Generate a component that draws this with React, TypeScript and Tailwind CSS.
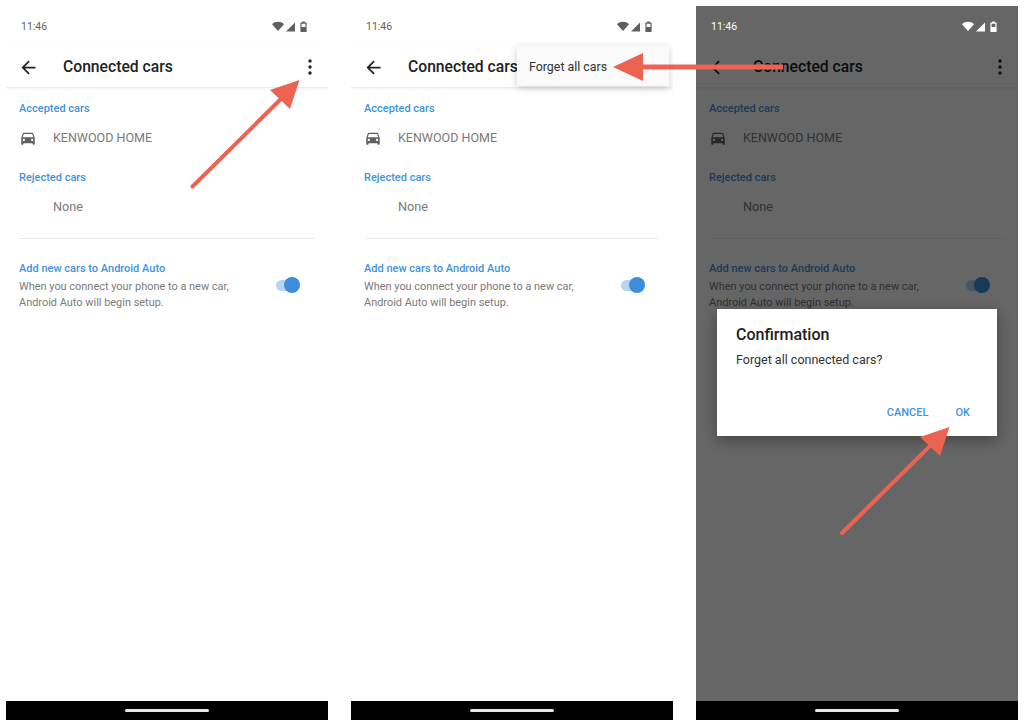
import React from 'react';

const carPath =
  'M18.92 6.01C18.72 5.42 18.16 5 17.5 5h-11c-.66 0-1.21.42-1.42 1.01L3 12v8c0 .55.45 1 1 1h1c.55 0 1-.45 1-1v-1h12v1c0 .55.45 1 1 1h1c.55 0 1-.45 1-1v-8l-2.08-5.99zM6.5 16c-.83 0-1.5-.67-1.5-1.5S5.67 13 6.5 13s1.5.67 1.5 1.5S7.33 16 6.5 16zm11 0c-.83 0-1.5-.67-1.5-1.5s.67-1.5 1.5-1.5 1.5.67 1.5 1.5-.67 1.5-1.5 1.5zM5 11l1.5-4.5h11L19 11H5z';

function StatusBar({ light }: { light?: boolean }) {
  const color = light ? '#ffffff' : '#5f5f5f';
  return (
    <div className="relative z-10 flex h-[41px] items-center justify-between pl-[15px] pr-[21px]">
      <span className={`text-[10.5px] ${light ? 'text-white' : 'text-[#5f5f5f]'}`}>11:46</span>
      <svg width="35" height="12" viewBox="0 0 35 12" fill={color}>
        <path d="M0 3.2C1.7 1.6 3.8.8 6 .8s4.3.8 6 2.4L6 10z" />
        <path d="M23 1.5V10.5H14z" />
        <path
          fillRule="evenodd"
          d="M29 1.5h1.2V.5h2.6v1h1.2c.4 0 .6.3.6.6V10.4c0 .4-.2.6-.6.6h-5c-.4 0-.6-.2-.6-.6V2.1c0-.3.2-.6.6-.6zm.6 1.2v3.3h3.8V2.7z"
        />
      </svg>
    </div>
  );
}

function Toolbar() {
  return (
    <div className="flex h-[41px] items-center border-b border-[#ececec] pl-[12px] pr-[15px] shadow-[0_1px_3px_rgba(0,0,0,0.06)]">
      <svg width="21" height="21" viewBox="0 0 24 24" fill="#222222">
        <path d="M20 11H7.83l5.59-5.59L12 4l-8 8 8 8 1.41-1.41L7.83 13H20v-2z" />
      </svg>
      <span className="ml-[24px] flex-1 text-[15.7px] font-medium text-[#212121]">Connected cars</span>
      <svg width="6" height="18" viewBox="0 0 6 18" fill="#222222">
        <circle cx="3" cy="3" r="1.7" />
        <circle cx="3" cy="9" r="1.7" />
        <circle cx="3" cy="15" r="1.7" />
      </svg>
    </div>
  );
}

function SectionLabel({ children }: { children: React.ReactNode }) {
  return <div className="text-[11px] font-medium leading-[16px] text-[#3f93dc]">{children}</div>;
}

function Content() {
  return (
    <div className="px-[13px] pt-[13px]">
      <SectionLabel>Accepted cars</SectionLabel>
      <div className="mt-[5px] flex h-[32px] items-center">
        <svg width="18" height="18" viewBox="0 0 24 24" fill="#616161">
          <path d={carPath} />
        </svg>
        <span className="ml-[16px] text-[12.5px] text-[#7a7a7a]">KENWOOD HOME</span>
      </div>
      <div className="mt-[16px]">
        <SectionLabel>Rejected cars</SectionLabel>
      </div>
      <div className="mt-[6px] flex h-[30px] items-center pl-[34px] text-[12.7px] text-[#7a7a7a]">None</div>
      <div className="mt-[16px] h-px bg-[#ececec]" />
      <div className="mt-[22px] flex items-center pr-[15px]">
        <div className="flex-1">
          <SectionLabel>Add new cars to Android Auto</SectionLabel>
          <p className="mt-[2px] text-[10.95px] leading-[16px] text-[#7a7a7a]">
            When you connect your phone to a new car,
            <br />
            Android Auto will begin setup.
          </p>
        </div>
        <div className="relative mb-[2px] mr-[5px] h-[11px] w-[19px] rounded-full bg-[#b7d5f0]">
          <div className="absolute -right-[5px] -top-[2.5px] h-[16px] w-[16px] rounded-full bg-[#3d8ddb]" />
        </div>
      </div>
    </div>
  );
}

function Phone({ dimmed, children }: { dimmed?: boolean; children?: React.ReactNode }) {
  return (
    <div className="relative flex h-[714px] w-[322px] flex-col overflow-hidden bg-white">
      <StatusBar light={dimmed} />
      <Toolbar />
      <div className="flex-1">
        <Content />
      </div>
      <div className="relative z-10 flex h-[19px] items-center justify-center bg-black">
        <div className="h-[3px] w-[84px] rounded-full bg-[#e8e8e8]" />
      </div>
      {dimmed && <div className="absolute inset-0 bg-black/60" />}
      {children}
    </div>
  );
}

function ConfirmDialog() {
  return (
    <div className="absolute left-[21px] top-[303px] flex h-[127px] w-[280px] flex-col bg-white px-[19px] pt-[16px] shadow-[0_4px_14px_rgba(0,0,0,0.35)]">
      <div className="text-[16px] font-medium leading-[20px] text-[#212121]">Confirmation</div>
      <div className="mt-[6px] text-[12.5px] leading-[18px] text-[#333333]">Forget all connected cars?</div>
      <div className="mt-[36px] flex justify-end gap-[27px] pr-[8px] text-[11px] font-medium leading-[16px] text-[#3f93dc]">
        <span>CANCEL</span>
        <span>OK</span>
      </div>
    </div>
  );
}

export default function App() {
  return (
    <div
      className="relative flex h-[726px] w-[1024px] gap-[23px] overflow-hidden bg-white p-[6px]"
      style={{ fontFamily: 'Roboto, "Liberation Sans", sans-serif' }}
    >
      <Phone />
      <Phone>
        <div className="absolute left-[166px] top-[40px] flex h-[40px] w-[152px] items-center bg-[#fafafa] pl-[12px] pt-[3px] text-[12.4px] text-[#333333] shadow-[0_2px_8px_rgba(0,0,0,0.2)]">
          Forget all cars
        </div>
      </Phone>
      <Phone dimmed>
        <ConfirmDialog />
      </Phone>

      {/* annotation arrows */}
      <svg className="pointer-events-none absolute left-0 top-0" width="1024" height="726" fill="#ec6351">
        <line x1="192.5" y1="186.5" x2="282" y2="98" stroke="#ec6351" strokeWidth="4" strokeLinecap="round" />
        <path d="M299.5 80L270 90L290 109z" />
        <line x1="640" y1="67" x2="783" y2="67" stroke="#ec6351" strokeWidth="5" />
        <path d="M613 67L643 53V81z" />
        <line x1="842" y1="533" x2="932" y2="444" stroke="#ec6351" strokeWidth="4" strokeLinecap="round" />
        <path d="M949.5 427L920 437L940 456z" />
      </svg>
    </div>
  );
}
